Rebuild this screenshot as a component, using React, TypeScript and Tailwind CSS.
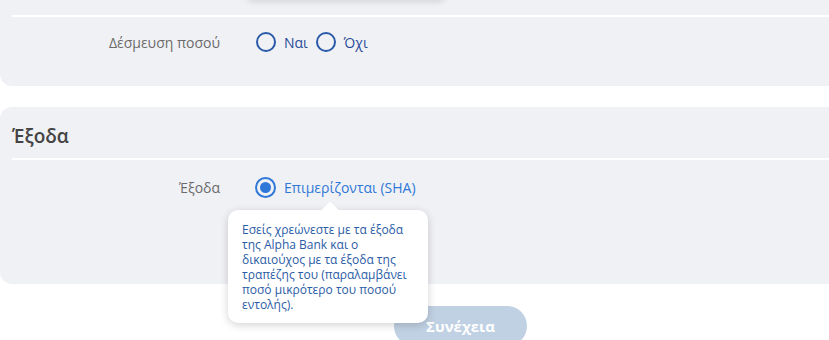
export default function App() {
  const font = { fontFamily: '"Open Sans", "Noto Sans", sans-serif' };

  return (
    <div className="w-[829px] h-[340px] overflow-hidden bg-white" style={font}>
      {/* Commitment panel */}
      <section className="relative bg-[#f0f1f5] rounded-bl-xl h-[86px]">
        {/* bottom edge of the dropdown above */}
        <div className="absolute left-[246px] top-[-40px] w-[200px] h-[40px] bg-[#f0f1f5] rounded-lg shadow-[0_2px_6px_rgba(0,0,0,0.12)]" />
        <div className="pt-[15px] pl-3">
          <div className="h-[2px] bg-white" />
        </div>
        <div className="flex items-center h-[26px] mt-[12px]">
          <div className="w-[220px] text-right text-[14px] text-[#6b6b6b]">Δέσμευση ποσού</div>
          <div className="flex items-center ml-[36px] gap-2">
            <Radio />
            <span className="text-[14px] text-[#2a4c98]">Ναι</span>
            <Radio />
            <span className="text-[14px] text-[#2a4c98]">Όχι</span>
          </div>
        </div>
      </section>

      {/* Charges panel */}
      <section className="relative mt-[21px] bg-[#f0f1f5] rounded-l-xl h-[177px]">
        <h2 className="pl-3 pt-[16px] text-[19px] font-semibold text-[#444] leading-[26px]">Έξοδα</h2>
        <div className="pl-3 mt-[9px]">
          <div className="h-[2px] bg-white" />
        </div>
        <div className="flex items-center h-[26px] mt-[14px]">
          <div className="w-[220px] text-right text-[14px] text-[#6b6b6b]">Έξοδα</div>
          <div className="flex items-center ml-[35px] gap-2">
            <Radio checked />
            <span className="text-[14px] text-[#2f78d8]">Επιμερίζονται (SHA)</span>
          </div>
        </div>

        {/* tooltip */}
        <div className="absolute left-[228px] top-[103px] w-[200px] z-10 bg-white rounded-[10px] shadow-[0_2px_8px_rgba(0,0,0,0.18)] px-[14px] pt-[12px] pb-[11px]">
          <div className="absolute left-[96px] top-[-6px] w-[12px] h-[12px] bg-white rotate-45" />
          <p className="relative text-[12px] leading-[15px] text-[#2a5ca6]">
            Εσείς χρεώνεστε με τα έξοδα της Alpha Bank και ο δικαιούχος με τα έξοδα της τραπέζης του (παραλαμβάνει ποσό μικρότερο του ποσού εντολής).
          </p>
        </div>
      </section>

      <div className="flex justify-start pl-[394px] mt-[22px]">
        <button className="w-[133px] h-[40px] rounded-full bg-[#c0d1e3] text-white text-[15px] font-bold">
          Συνέχεια
        </button>
      </div>
    </div>
  );
}

function Radio({ checked = false }: { checked?: boolean }) {
  return checked ? (
    <span className="flex items-center justify-center w-[21px] h-[21px] rounded-full border-2 border-[#2f78d8]">
      <span className="w-[11px] h-[11px] rounded-full bg-[#2f78d8]" />
    </span>
  ) : (
    <span className="w-[20px] h-[20px] rounded-full border-2 border-[#2a5aa8]" />
  );
}
